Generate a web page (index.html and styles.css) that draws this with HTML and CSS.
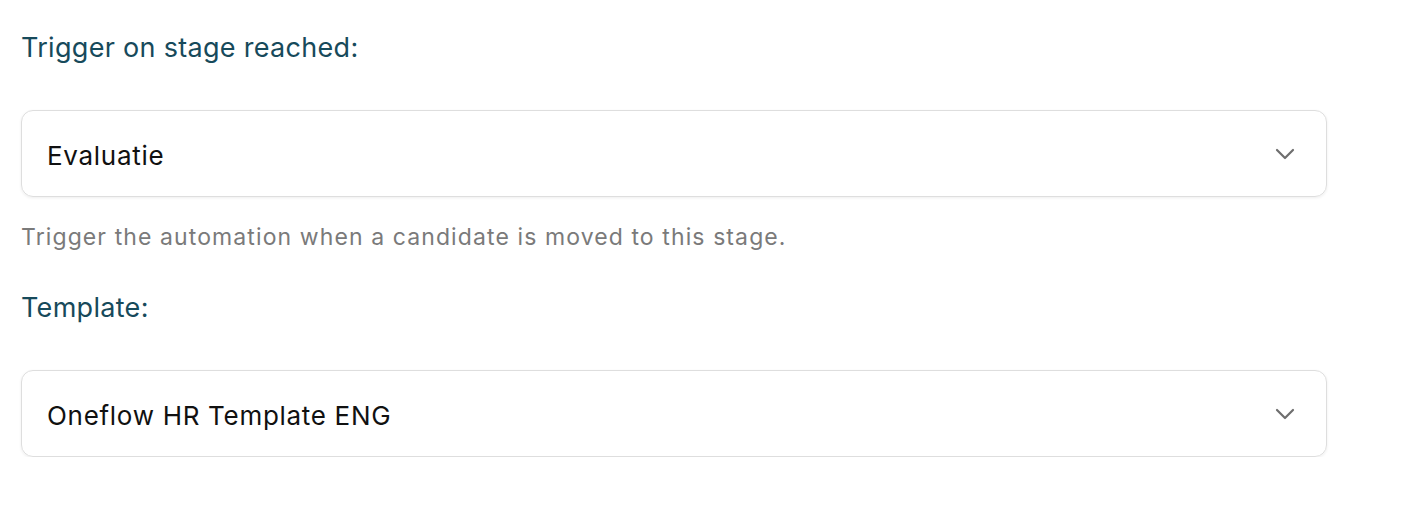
FILE: index.html
```html
<!DOCTYPE html>
<html>
<head>
<meta charset="utf-8">
<link rel="stylesheet" href="styles.css">
</head>
<body>
<div class="form">
  <div class="field">
    <label class="label">Trigger on stage reached:</label>
    <div class="select">
      <span class="value">Evaluatie</span>
      <svg class="chev" width="20" height="12" viewBox="0 0 20 12"><path d="M2 2 L10 10 L18 2" fill="none" stroke="#6e6e6e" stroke-width="2.2" stroke-linecap="round" stroke-linejoin="round"/></svg>
    </div>
    <p class="help">Trigger the automation when a candidate is moved to this stage.</p>
  </div>
  <div class="field">
    <label class="label">Template:</label>
    <div class="select">
      <span class="value">Oneflow HR Template ENG</span>
      <svg class="chev" width="20" height="12" viewBox="0 0 20 12"><path d="M2 2 L10 10 L18 2" fill="none" stroke="#6e6e6e" stroke-width="2.2" stroke-linecap="round" stroke-linejoin="round"/></svg>
    </div>
  </div>
</div>
</body>
</html>
```
FILE: styles.css
```css
html, body {
  margin: 0;
  padding: 0;
  background: #ffffff;
}
body {
  font-family: Inter, "Noto Sans", sans-serif;
}
.form {
  width: 1306px;
  padding: 32px 0 0 21px;
}
.field {
  display: flex;
  flex-direction: column;
}
.label {
  font-size: 27px;
  line-height: 32px;
  letter-spacing: 0.3px;
  color: #174a5b;
  font-weight: 400;
  margin-bottom: 46px;
}
.select {
  box-sizing: border-box;
  height: 87px;
  border: 1.5px solid #dedede;
  border-radius: 12px;
  box-shadow: 0 1px 3px rgba(0,0,0,0.07);
  display: flex;
  align-items: center;
  justify-content: space-between;
  padding: 0 31px 0 25px;
}
.value {
  font-size: 26px;
  letter-spacing: 0.7px;
  color: #111;
  padding-top: 3px;
}
.chev {
  display: block;
}
.help {
  margin: 25px 0 40px;
  font-size: 23px;
  line-height: 30px;
  letter-spacing: 1.1px;
  color: #7a7a7a;
}
```
